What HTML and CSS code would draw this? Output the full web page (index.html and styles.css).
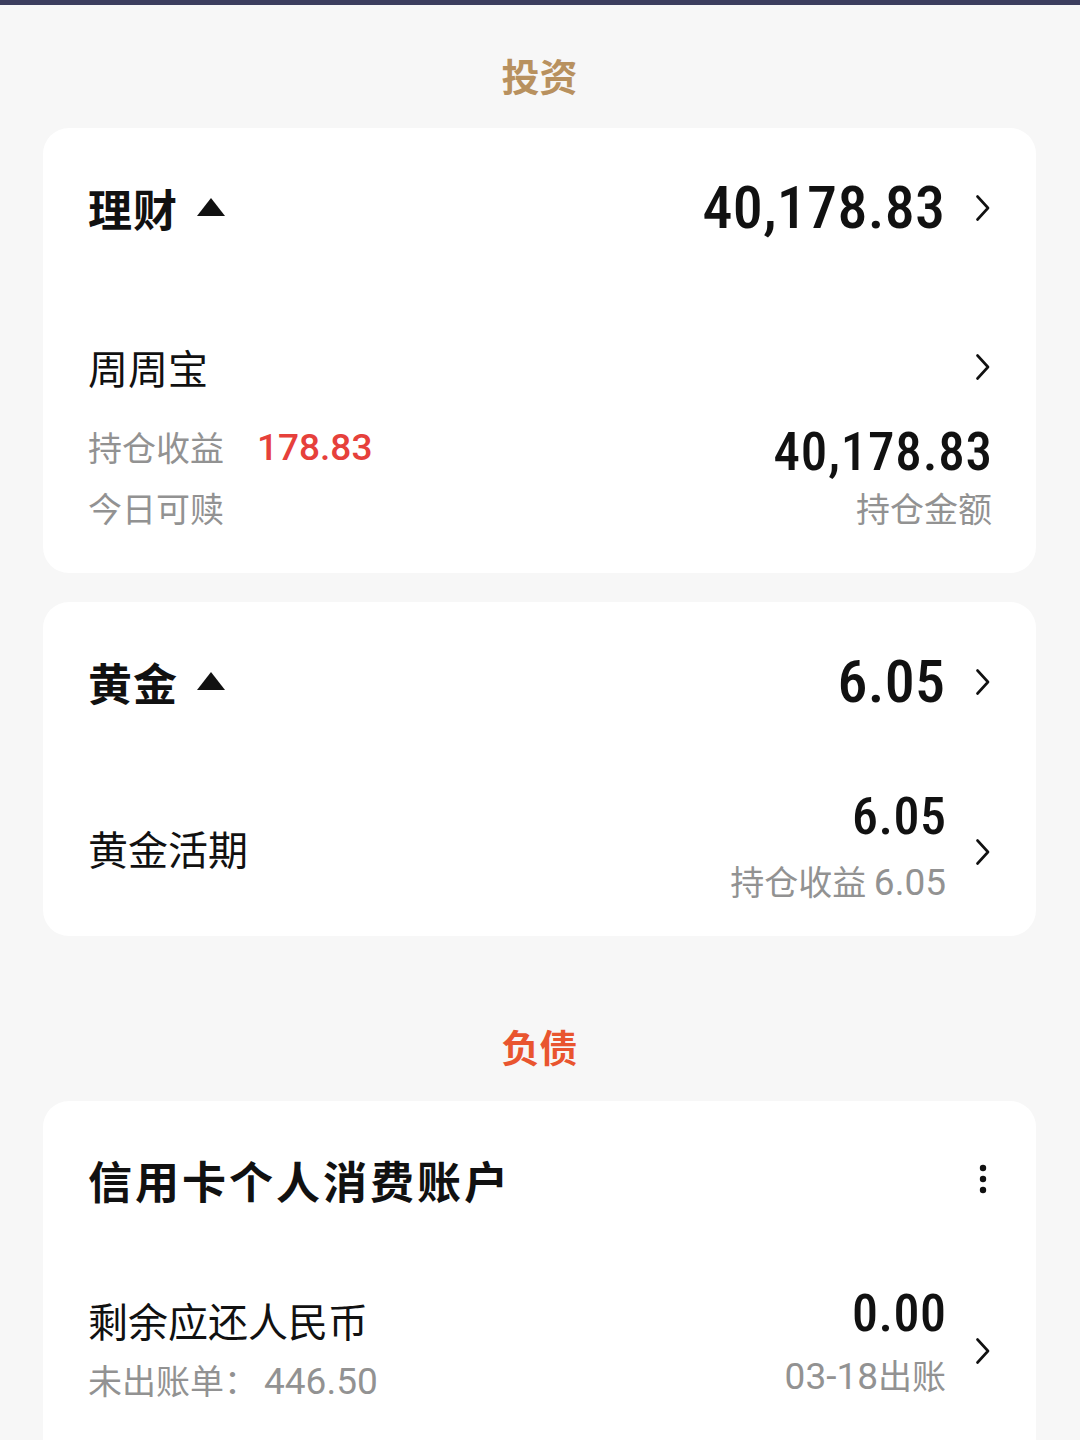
FILE: index.html
```html
<!DOCTYPE html>
<html lang="zh-CN">
<head>
<meta charset="utf-8">
<title>资产</title>
<link rel="stylesheet" href="styles.css">
</head>
<body>
<div class="topbar"></div>
<main class="page">
  <h2 class="section-title gold">投资</h2>

  <section class="card">
    <div class="card-head">
      <div class="head-left"><span class="head-name">理财</span><svg class="tri" viewBox="0 0 28 18"><polygon points="14,0 28,18 0,18"/></svg></div>
      <div class="head-right"><span class="num-xl">40,178.83</span><svg class="chev" viewBox="0 0 14 26"><polyline points="1.5,1.5 12,13 1.5,24.5"/></svg></div>
    </div>
    <div class="item item-a">
      <div class="item-title-row"><span class="item-name">周周宝</span><svg class="chev" viewBox="0 0 14 26"><polyline points="1.5,1.5 12,13 1.5,24.5"/></svg></div>
      <div class="item-body">
        <div class="col-left">
          <div class="line l1"><span class="sub">持仓收益</span><span class="red-num">178.83</span></div>
          <div class="line l2"><span class="sub">今日可赎</span></div>
        </div>
        <div class="col-right">
          <div class="line r1"><span class="num-l">40,178.83</span></div>
          <div class="line r2"><span class="sub">持仓金额</span></div>
        </div>
      </div>
    </div>
  </section>

  <section class="card card-gold">
    <div class="card-head">
      <div class="head-left"><span class="head-name">黄金</span><svg class="tri" viewBox="0 0 28 18"><polygon points="14,0 28,18 0,18"/></svg></div>
      <div class="head-right"><span class="num-xl">6.05</span><svg class="chev" viewBox="0 0 14 26"><polyline points="1.5,1.5 12,13 1.5,24.5"/></svg></div>
    </div>
    <div class="item item-b">
      <span class="item-name">黄金活期</span>
      <div class="item-right">
        <div class="col-right">
          <div class="line g1"><span class="num-m">6.05</span></div>
          <div class="line g2"><span class="sub">持仓收益 <span class="sub-num">6.05</span></span></div>
        </div>
        <svg class="chev" viewBox="0 0 14 26"><polyline points="1.5,1.5 12,13 1.5,24.5"/></svg>
      </div>
    </div>
  </section>

  <h2 class="section-title red second">负债</h2>

  <section class="card card-debt">
    <div class="card-head debt-head">
      <span class="head-name">信用卡个人消费账户</span>
      <svg class="dots" viewBox="0 0 8 36"><circle cx="4" cy="4" r="3.2"/><circle cx="4" cy="15" r="3.2"/><circle cx="4" cy="26" r="3.2"/></svg>
    </div>
    <div class="item item-c">
      <div class="col-left">
        <div class="line d1"><span class="item-name">剩余应还人民币</span></div>
        <div class="line d2"><span class="sub">未出账单：<span class="sub-num gap">446.50</span></span></div>
      </div>
      <div class="item-right">
        <div class="col-right">
          <div class="line e1"><span class="num-m">0.00</span></div>
          <div class="line e2"><span class="sub"><span class="sub-num">03-18</span>出账</span></div>
        </div>
        <svg class="chev" viewBox="0 0 14 26"><polyline points="1.5,1.5 12,13 1.5,24.5"/></svg>
      </div>
    </div>
  </section>
</main>
</body>
</html>
```

FILE: styles.css
```css
* { box-sizing: border-box; }
html, body { margin: 0; padding: 0; }
body {
  background: #f7f7f7;
  font-family: "Noto Sans CJK SC", "Noto Sans", sans-serif;
  color: #111;
  width: 1080px;
  height: 1440px;
  overflow: hidden;
}
.topbar { height: 5px; background: #3c3e5e; }
.page { padding: 45px 44px 0 43px; }

.section-title {
  margin: 0 0 28px;
  height: 50px;
  line-height: 50px;
  text-align: center;
  font-size: 38px;
  font-weight: 700;
}
.section-title.gold { color: #b8915f; }
.section-title.red { color: #e9552f; }
.section-title.second { margin-top: 85px; margin-bottom: 30px; }

.card {
  background: #fff;
  border-radius: 26px;
  padding: 0 44px 34px 45px;
}
.card + .card { margin-top: 29px; }
.card-gold { padding-bottom: 19px; }
.card-debt { padding-bottom: 40px; border-bottom-left-radius: 0; border-bottom-right-radius: 0; }

.card-head {
  height: 160px;
  display: flex;
  align-items: center;
  justify-content: space-between;
}
.debt-head { height: 158px; }
.head-left { display: flex; align-items: center; }
.head-name { font-size: 44px; font-weight: 700; letter-spacing: 1px; line-height: 1; }
.debt-head .head-name { letter-spacing: 3px; }
.tri { width: 28px; height: 18px; margin-left: 19px; margin-top: -2px; fill: #111; }
.head-right { display: flex; align-items: center; }
.chev {
  width: 14px; height: 26px;
  fill: none; stroke: #111; stroke-width: 2.6; stroke-linecap: round; stroke-linejoin: round;
  flex: none;
}
.head-right .chev { margin-left: 31px; margin-right: 2px; }

.num-xl, .num-l, .num-m {
  font-family: "Roboto Condensed", "Open Sans", sans-serif;
  font-weight: 500;
  color: #111;
  line-height: 1;
}
.num-xl { font-size: 60px; letter-spacing: 0.3px; margin-right: -0.3px; }
.num-l { font-size: 53px; letter-spacing: 0.8px; margin-right: -0.8px; }
.num-m { font-size: 52px; letter-spacing: 0.5px; margin-right: -0.5px; }

.item-title-row {
  margin-top: 55px;
  height: 48px;
  display: flex;
  align-items: center;
  justify-content: space-between;
}
.item-title-row .chev { margin-right: 2px; }
.item-name { font-size: 40px; line-height: 1; }

.item-body {
  margin-top: 26px;
  display: flex;
  justify-content: space-between;
}
.line { display: flex; align-items: center; }
.col-right { display: flex; flex-direction: column; align-items: flex-end; }
.col-right .line { justify-content: flex-end; }

.l1 { height: 60px; }
.l2 { height: 62px; }
.r1 { height: 70px; }
.r2 { height: 42px; }

.sub { font-size: 34px; color: #929292; line-height: 1; white-space: nowrap; }
.sub-num { font-family: "Roboto", "Noto Sans", sans-serif; font-size: 37px; color: #929292; }
.sub-num.gap { margin-left: 6px; }
.red-num {
  font-family: "Roboto", "Noto Sans", sans-serif;
  font-size: 37px; font-weight: 500; color: #e6403b;
  margin-left: 33px; line-height: 1;
}

.item-b {
  padding-top: 25px;
  display: flex;
  align-items: center;
  justify-content: space-between;
}
.item-b > .item-name { margin-top: -8px; }
.item-right { display: flex; align-items: center; }
.item-right .chev { margin-left: 30px; margin-right: 2px; }
.g1 { height: 60px; }
.g2 { height: 70px; }

.item-c {
  padding-top: 31px;
  display: flex;
  justify-content: space-between;
}
.d1 { height: 60px; }
.d2 { height: 62px; }
.e1 { height: 52px; margin-top: -2px; }
.e2 { height: 72px; }

.dots { width: 8px; height: 36px; fill: #111; margin-right: 5px; margin-top: 4px; }
```
